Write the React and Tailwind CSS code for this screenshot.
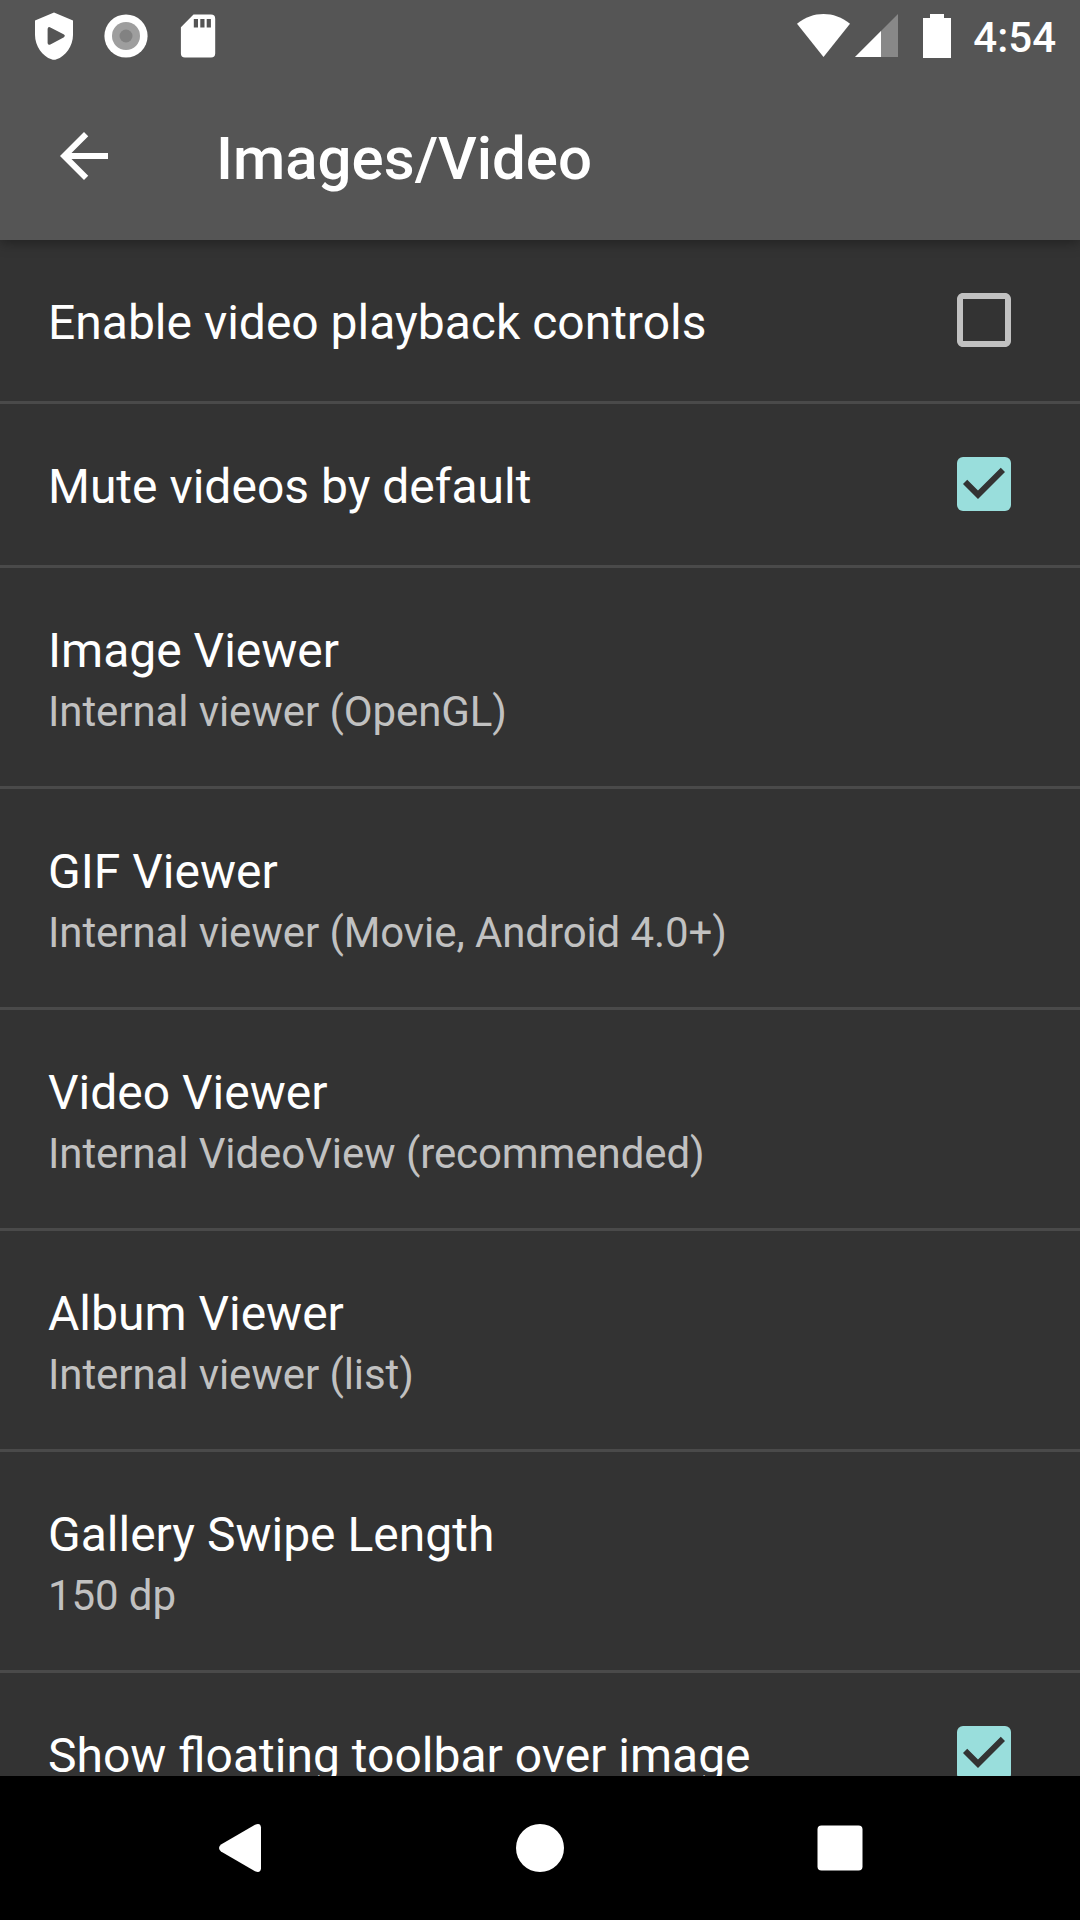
const settings = [
  { title: "Enable video playback controls", checked: false },
  { title: "Mute videos by default", checked: true },
  { title: "Image Viewer", summary: "Internal viewer (OpenGL)" },
  { title: "GIF Viewer", summary: "Internal viewer (Movie, Android 4.0+)" },
  { title: "Video Viewer", summary: "Internal VideoView (recommended)" },
  { title: "Album Viewer", summary: "Internal viewer (list)" },
  { title: "Gallery Swipe Length", summary: "150 dp" },
  { title: "Show floating toolbar over image", checked: true },
];

function StatusBar() {
  return (
    <div className="flex h-[72px] items-center justify-between pl-[18px] pr-6 text-white">
      <div className="flex">
        <svg className="size-[72px]" viewBox="0 0 72 72" fill="currentColor">
          <path
            fillRule="evenodd"
            d="M36 12.6 55 20.6V35C55 46 47.500 56.500 38.500 59.300Q36 60.300 33.500 59.300C24.500 56.500 17 46 17 35V20.600ZM29.600 29V43Q29.800 45.600 32.400 44.400L46 37.200Q47.800 35.800 46 34.600L32.400 27.400Q29.800 26.400 29.600 29Z"
          />
        </svg>
        <svg className="size-[72px]" viewBox="0 0 72 72">
          <circle cx="36" cy="36" r="21.600" fill="#fff" />
          <circle cx="36" cy="36" r="14" fill="#9e9e9e" />
          <circle cx="36" cy="36" r="6.500" fill="#828282" />
        </svg>
        <svg className="size-[72px]" viewBox="0 0 72 72" fill="currentColor">
          <path
            fillRule="evenodd"
            d="M31.500 14.500H49Q53.200 14.500 53.200 18.700V53.400Q53.200 57.500 49 57.500H23Q18.900 57.500 18.900 53.400V27.200ZM31.800 19V27.500H36V19ZM38.300 19V27.500H42.500V19ZM44.700 19V27.500H48.900V19Z"
          />
        </svg>
      </div>
      <div className="flex items-center">
        <svg className="mr-[5px] h-[72px] w-[53px]" viewBox="0 0 53 72" fill="currentColor">
          <path d="M0 23.800C16 10.800 37 10.800 53 23.800L26.500 57Z" />
        </svg>
        <svg className="mr-[25px] h-[72px] w-[43px]" viewBox="0 0 43 72" fill="currentColor">
          <path d="M43 14V57H0Z" fillOpacity="0.3" />
          <path d="M26 31V57H0Z" />
        </svg>
        <svg className="mr-[22px] h-[72px] w-7" viewBox="0 0 28 72" fill="currentColor">
          <path d="M7 14H21V18H28V58H0V18H7Z" />
        </svg>
        <span className="pt-[3px] text-[42px] font-medium leading-[72px]">4:54</span>
      </div>
    </div>
  );
}

function Toolbar() {
  return (
    <div className="flex h-[168px] items-center pl-12">
      <svg className="size-[72px]" viewBox="0 0 24 24" fill="#fff">
        <path d="M20 11H7.830l5.590-5.590L12 4l-8 8 8 8 1.410-1.410L7.830 13H20z" />
      </svg>
      <h1 className="ml-24 pt-1.5 text-[60px] font-medium leading-[72px] text-white">Images/Video</h1>
    </div>
  );
}

function Checkbox({ checked }) {
  return (
    <svg className="-mb-4 -mt-1 size-[72px] shrink-0" viewBox="0 0 24 24" role="checkbox" aria-checked={checked}>
      {checked ? (
        <>
          <rect x="3" y="3" width="18" height="18" rx="2" fill="#99dedc" />
          <path d="M10 17l-5-5 1.410-1.410L10 14.170l7.590-7.590L19 8z" fill="#333" />
        </>
      ) : (
        <path
          fill="#c1c1c1"
          d="M19 5v14H5V5h14m0-2H5c-1.100 0-2 .9-2 2v14c0 1.100.9 2 2 2h14c1.100 0 2-.9 2-2V5c0-1.100-.9-2-2-2z"
        />
      )}
    </svg>
  );
}

function SettingRow({ title, summary, checked }) {
  return (
    <li className="flex shrink-0 items-start justify-between border-b-[3px] border-[#4a4a4a] py-12 pl-12 pr-[60px]">
      <div>
        <div className="relative top-0.5 text-[48px] leading-[65px] text-white">{title}</div>
        {summary && (
          <div className="relative top-0.5 text-[42px] leading-[57px] tracking-[-0.09px] text-[#c1c1c1]">
            {summary}
          </div>
        )}
      </div>
      {checked !== undefined && <Checkbox checked={checked} />}
    </li>
  );
}

function NavigationBar() {
  return (
    <nav className="flex h-36 shrink-0 items-center justify-center bg-black">
      <div className="flex w-[300px] justify-center">
        <svg className="size-12" viewBox="0 0 48 48" fill="#fff">
          <path d="M5 20.500 39 .8Q44.500-1.500 45 3.500V44.500Q44.500 49.500 39 47.200L5 27.500Q1 24 5 20.500Z" />
        </svg>
      </div>
      <div className="flex w-[300px] justify-center">
        <div className="size-12 rounded-full bg-white" />
      </div>
      <div className="flex w-[300px] justify-center">
        <svg className="size-12" viewBox="0 0 48 48" fill="#fff">
          <rect x="1.500" y="1.500" width="45" height="45" rx="4" />
        </svg>
      </div>
    </nav>
  );
}

export default function App() {
  return (
    <div className="flex h-[1920px] w-[1080px] flex-col overflow-hidden bg-[#333] font-['Roboto',sans-serif]">
      <header className="z-10 shrink-0 bg-[#555] shadow-[0_3px_12px_rgba(0,0,0,0.35)]">
        <StatusBar />
        <Toolbar />
      </header>
      <ul className="flex min-h-0 flex-1 flex-col overflow-hidden">
        {settings.map((item) => (
          <SettingRow key={item.title} {...item} />
        ))}
      </ul>
      <NavigationBar />
    </div>
  );
}
